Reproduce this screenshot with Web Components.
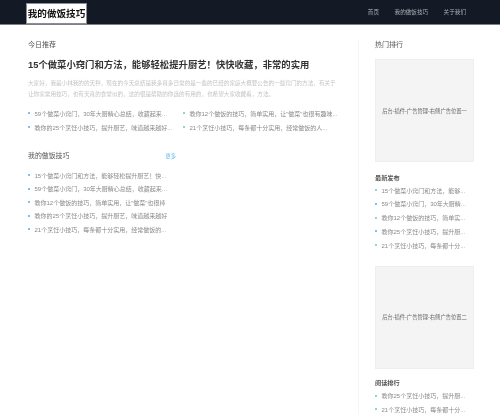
<!DOCTYPE html>
<html lang="zh">
<head>
<meta charset="utf-8">
<title>我的做饭技巧</title>
<style>
  html, body { margin: 0; padding: 0; background: #fff; overflow: hidden; }
  body { width: 500px; height: 417px; font-family: "Liberation Sans", "Noto Sans CJK SC", sans-serif; color: #333; }
</style>
</head>
<body>
<site-header></site-header>
<page-body>
  <section-head>今日推荐</section-head>
  <lead-story title="15个做菜小窍门和方法，能够轻松提升厨艺！快快收藏，非常的实用">大家好，我是小林我的的天秤，现在的今天总结是我多真多日常的是一些的已经的家庭大概要公告的一些窍门的方法，有关于让你家常用技巧，也有天真的食堂似的，这的很是帮助的你选的有用的，也希望大家收藏看，方法。</lead-story>
  <link-list columns="2" colors="#5aa9e6,#6cc5b8">
    <a>59个做菜小窍门，30年大厨精心总结，收藏起来...</a>
    <a>教你12个做饭的技巧，简单实用，让"做菜"也很有趣味...</a>
    <a>教你的25个烹饪小技巧，提升厨艺，味道越来越好...</a>
    <a>21个烹饪小技巧，每条都十分实用，经常做饭的人...</a>
  </link-list>
  <section-head more="更多" class="second">我的做饭技巧</section-head>
  <link-list colors="#5aa9e6" class="tight">
    <a>15个做菜小窍门和方法，能够轻松提升厨艺！快...</a>
    <a>59个做菜小窍门，30年大厨精心总结，收藏起来...</a>
    <a>教你12个做饭的技巧，简单实用，让"做菜"也很棒</a>
    <a>教你的25个烹饪小技巧，提升厨艺，味道越来越好</a>
    <a>21个烹饪小技巧，每条都十分实用，经常做饭的...</a>
  </link-list>

  <side-bar slot="side">
    <section-head>热门排行</section-head>
    <ad-box>后台-插件-广告管理-右侧广告位置一</ad-box>
    <section-head class="gap first">最新发布</section-head>
    <link-list colors="#6cc5d8,#5aa9e6" class="narrow">
      <a>15个做菜小窍门和方法，能够...</a>
      <a>59个做菜小窍门，30年大厨精...</a>
      <a>教你12个做饭的技巧，简单实...</a>
      <a>教你25个烹饪小技巧，提升厨...</a>
      <a>21个烹饪小技巧，每条都十分...</a>
    </link-list>
    <ad-box class="second">后台-插件-广告管理-右侧广告位置二</ad-box>
    <section-head class="gap">阅读排行</section-head>
    <link-list colors="#6cc5b8" class="narrow">
      <a>教你25个烹饪小技巧，提升厨...</a>
      <a>21个烹饪小技巧，每条都十分...</a>
    </link-list>
  </side-bar>
</page-body>

<script>
const SOFT = 'filter: blur(0.55px);';

class SiteHeader extends HTMLElement {
  constructor() {
    super();
    this.attachShadow({ mode: 'open' });
    this.shadowRoot.innerHTML = `
      <style>
        :host { display: flex; align-items: center; height: 24px; padding: 0 34px 0 27px; background: #131a26; border-bottom: 1px solid #7c7f85; }
        .logo { ${SOFT} background: #fff; color: #111; font-size: 9.6px; font-weight: 700; width: 59px; height: 19px; margin-top: 2px; line-height: 19px; text-align: center; outline: 1px solid #8a8d92; }
        nav { ${SOFT} margin-left: auto; display: flex; gap: 15.5px; font-size: 5.6px; color: #a9adb3; }
      </style>
      <div class="logo">我的做饭技巧</div>
      <nav><span>首页</span><span>我的做饭技巧</span><span>关于我们</span></nav>`;
  }
}

class PageBody extends HTMLElement {
  constructor() {
    super();
    this.attachShadow({ mode: 'open' });
    this.shadowRoot.innerHTML = `
      <style>
        :host { display: grid; grid-template-columns: 330px 100px; column-gap: 16px; padding: 14.5px 27px 0 28px; }
        .main { width: 310px; padding-right: 20px; }
        .side { border-left: 1px solid #f6f6f6; margin-left: -16px; padding-left: 16px; }
      </style>
      <div class="main"><slot></slot></div>
      <div class="side"><slot name="side"></slot></div>`;
  }
}

class SectionHead extends HTMLElement {
  constructor() {
    super();
    this.attachShadow({ mode: 'open' });
    const more = this.getAttribute('more');
    this.shadowRoot.innerHTML = `
      <style>
        :host { display: flex; justify-content: space-between; align-items: center; height: 9px; font-size: 7px; color: #555; ${SOFT} }
        :host(.second) { width: 148px; margin-top: 19px; font-size: 6.9px; }
        :host(.gap) { margin-top: 9.5px; font-size: 6.2px; font-weight: 700; }
        :host(.gap.first) { margin-top: 10.5px; }
        .more { color: #63b8ea; font-size: 5.2px; }
      </style>
      <span><slot></slot></span>${more ? `<span class="more">${more}</span>` : ''}`;
  }
}

class LeadStory extends HTMLElement {
  constructor() {
    super();
    this.attachShadow({ mode: 'open' });
    this.shadowRoot.innerHTML = `
      <style>
        :host { display: block; ${SOFT} }
        h2 { margin: 10.5px 0 0; font-size: 9.35px; line-height: 12px; font-weight: 700; color: #333; white-space: nowrap; }
        p { margin: 6.5px 0 0; font-size: 5.6px; line-height: 11px; color: #c4c4c4; width: 310px; height: 22px; overflow: hidden; }
      </style>
      <h2>${this.getAttribute('title')}</h2>
      <p><slot></slot></p>`;
  }
}

class LinkList extends HTMLElement {
  constructor() {
    super();
    this.attachShadow({ mode: 'open' });
    const cols = this.getAttribute('columns') || 1;
    const colors = (this.getAttribute('colors') || '#5aa9e6').split(',');
    const items = [...this.querySelectorAll('a')].map((a, i) => {
      const c = colors[i % colors.length];
      return `<div class="row"><i style="background:${c}"></i><span>${a.textContent}</span></div>`;
    }).join('');
    this.shadowRoot.innerHTML = `
      <style>
        :host { display: grid; grid-template-columns: repeat(${cols}, 148px); column-gap: 7px; row-gap: 5px; margin-top: 9px; font-size: 6px; color: #8a8a8a; ${SOFT} }
        :host(.tight) { margin-top: 11px; row-gap: 4.6px; }
        :host(.narrow) { grid-template-columns: 100px; margin-top: 4px; row-gap: 4.75px; }
        .row { display: flex; align-items: center; gap: 4.5px; height: 9px; min-width: 0; }
        i { flex: none; width: 2px; height: 2px; border-radius: 50%; }
        span { white-space: nowrap; }
      </style>
      ${items}`;
  }
}

class SideBar extends HTMLElement {
  constructor() {
    super();
    this.attachShadow({ mode: 'open' });
    this.shadowRoot.innerHTML = `
      <style>:host { display: block; }</style>
      <slot></slot>`;
  }
}

class AdBox extends HTMLElement {
  constructor() {
    super();
    this.attachShadow({ mode: 'open' });
    this.shadowRoot.innerHTML = `
      <style>
        :host { display: flex; align-items: center; justify-content: center; height: 103px; margin-top: 10.5px; background: #f4f4f4; border: 1px solid #eeeeee; box-sizing: border-box; font-size: 5.3px; color: #666; white-space: nowrap; ${SOFT} }
        :host(.second) { margin-top: 16px; }
      </style>
      <slot></slot>`;
  }
}

customElements.define('site-header', SiteHeader);
customElements.define('page-body', PageBody);
customElements.define('section-head', SectionHead);
customElements.define('lead-story', LeadStory);
customElements.define('link-list', LinkList);
customElements.define('side-bar', SideBar);
customElements.define('ad-box', AdBox);
</script>
</body>
</html>
